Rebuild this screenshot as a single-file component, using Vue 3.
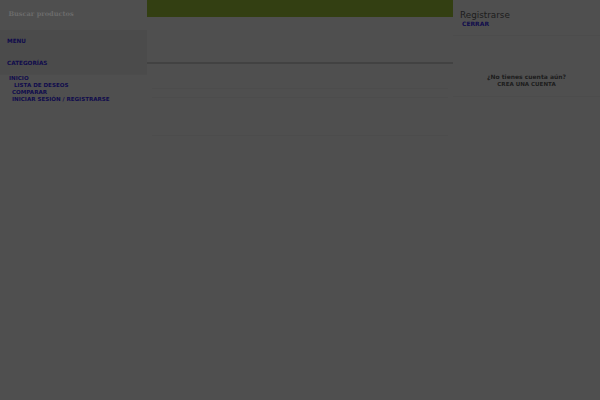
<template>
  <div class="page">
    <!-- menu lateral -->
    <aside class="left">
      <div class="search">Buscar productos</div>
      <div class="tabs">
        <div class="tab tab-menu">MENU</div>
        <div class="tab tab-cat">CATEGORÍAS</div>
      </div>
      <ul class="nav">
        <li v-for="item in navItems" :key="item.label" :class="item.cls">{{ item.label }}</li>
      </ul>
    </aside>

    <!-- centro -->
    <main class="center">
      <div class="topbar"></div>
      <div class="header"></div>
      <div class="row row-a"></div>
      <div class="row row-m"></div>
      <div class="row row-b"></div>
    </main>

    <!-- panel de cuenta -->
    <aside class="right">
      <div class="login-head">
        <div class="login-title">Registrarse</div>
        <div class="close">CERRAR</div>
      </div>
      <div class="register">
        <div class="question">¿No tienes cuenta aún?</div>
        <div class="create">CREA UNA CUENTA</div>
      </div>
    </aside>
  </div>
</template>

<script setup>
const navItems = [
  { label: 'INICIO', cls: 'home' },
  { label: 'LISTA DE DESEOS', cls: 'wish' },
  { label: 'COMPARAR', cls: 'plain' },
  { label: 'INICIAR SESIÓN / REGISTRARSE', cls: 'plain' }
]
</script>

<style>
html, body {
  margin: 0;
  background: #4f4f4f;
}
</style>

<style scoped>
.page {
  width: 600px;
  height: 400px;
  display: grid;
  grid-template-columns: 147px 306px 147px;
  background: #4f4f4f;
  overflow: hidden;
  opacity: 0.999;
  font-family: "DejaVu Sans", sans-serif;
}

.left {
  display: flex;
  flex-direction: column;
}

.search {
  height: 30px;
  box-sizing: border-box;
  padding: 9px 0 0 8.5px;
  font-family: "DejaVu Serif", serif;
  font-weight: 700;
  font-size: 6.6px;
  line-height: 10px;
  color: #6b6b6b;
}

.tabs {
  height: 45px;
  background: #4b4b4b;
  border-bottom: 1px solid #4c4c4c;
  box-sizing: border-box;
}

.tab {
  font-weight: 700;
  font-size: 5.7px;
  line-height: 8px;
  color: #100c4c;
  padding-left: 7px;
}

.tab-menu {
  padding-top: 7px;
}

.tab-cat {
  padding-top: 14px;
}

.nav {
  list-style: none;
  margin: 0;
  padding: 0;
  font-weight: 700;
  font-size: 5.55px;
  line-height: 7px;
  color: #100c4c;
}

.home {
  padding: 0 0 0 9px;
}

.wish {
  padding-left: 14px;
}

.plain {
  padding-left: 12px;
}

.center {
  display: flex;
  flex-direction: column;
}

.topbar {
  height: 17px;
  background: #333f12;
}

.header {
  height: 45px;
  border-bottom: 2px solid #424242;
}

.row {
  margin: 0 5px;
  border-bottom: 1px solid #4c4c4c;
}

.row-a {
  height: 24px;
}

.row-m {
  height: 8px;
}

.row-b {
  height: 37px;
}

.right {
  display: flex;
  flex-direction: column;
}

.login-head {
  height: 36px;
  box-sizing: border-box;
  padding: 10px 0 0 7px;
  border-bottom: 1px solid #4c4c4c;
}

.login-title {
  font-size: 8.8px;
  line-height: 10px;
  color: #1c1c1c;
}

.close {
  font-weight: 700;
  font-size: 6px;
  line-height: 8px;
  color: #100c4c;
  padding-left: 2px;
}

.register {
  height: 61px;
  box-sizing: border-box;
  padding-top: 37px;
  text-align: center;
  border-bottom: 1px solid #4c4c4c;
  font-weight: 700;
  font-size: 6px;
  line-height: 7px;
  color: #1c1c1c;
}

.question {
  line-height: 8px;
}

.create {
  font-size: 5.55px;
}
</style>
